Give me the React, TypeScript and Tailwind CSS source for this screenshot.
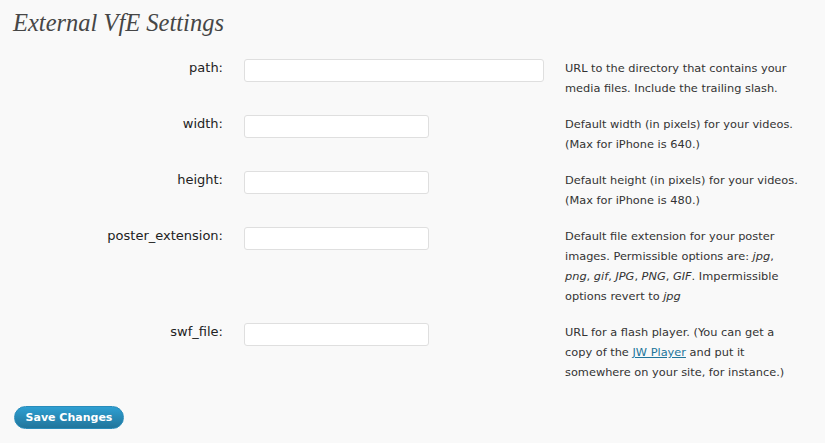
import React from "react";

const rows: { label: string; wide?: boolean; desc: React.ReactNode }[] = [
  {
    label: "path:",
    wide: true,
    desc: "URL to the directory that contains your media files. Include the trailing slash.",
  },
  {
    label: "width:",
    desc: "Default width (in pixels) for your videos. (Max for iPhone is 640.)",
  },
  {
    label: "height:",
    desc: "Default height (in pixels) for your videos. (Max for iPhone is 480.)",
  },
  {
    label: "poster_extension:",
    desc: (
      <>
        Default file extension for your poster images. Permissible options are: <em>jpg</em>,{" "}
        <em>png</em>, <em>gif</em>, <em>JPG</em>, <em>PNG</em>, <em>GIF</em>. Impermissible options revert to{" "}
        <em>jpg</em>
      </>
    ),
  },
  {
    label: "swf_file:",
    desc: (
      <>
        URL for a flash player. (You can get a copy of the{" "}
        <a href="#" className="text-[#21759b] underline">
          JW Player
        </a>{" "}
        and put it somewhere on your site, for instance.)
      </>
    ),
  },
];

export default function App() {
  return (
    <div
      className="w-[825px] h-[443px] bg-[#f9f9f9] text-[#333] pl-[13px] overflow-hidden"
      style={{ fontFamily: '"DejaVu Sans", sans-serif' }}
    >
      <div className="h-[50px] pt-[8px]">
        <h2
          className="text-[24.5px] leading-[30px] italic text-[#464646]"
          style={{ fontFamily: '"Liberation Serif", serif' }}
        >
          External VfE Settings
        </h2>
      </div>
      <div className="flex flex-col">
        {rows.map((r) => (
          <div key={r.label} className="flex items-start py-2">
            <div className="w-[210px] text-right text-[13px] leading-5 text-[#222]">{r.label}</div>
            <div className="w-[321px] ml-[21px] pt-px">
              <input
                type="text"
                className={`${r.wide ? "w-[300px]" : "w-[185px]"} h-[23px] bg-white border border-[#dfdfdf] rounded-[3px] block`}
              />
            </div>
            <div className="w-[236px] text-[11.35px] leading-5 text-[#333]">{r.desc}</div>
          </div>
        ))}
      </div>
      <div className="mt-4 flex">
        <button
          className="block ml-px w-[110px] h-[23px] rounded-full text-white font-bold text-[11px] border border-[#298cba] bg-gradient-to-b from-[#2e9fd2] to-[#21759b] leading-none"
          style={{ fontFamily: '"DejaVu Sans", sans-serif' }}
        >
          Save Changes
        </button>
      </div>
    </div>
  );
}
